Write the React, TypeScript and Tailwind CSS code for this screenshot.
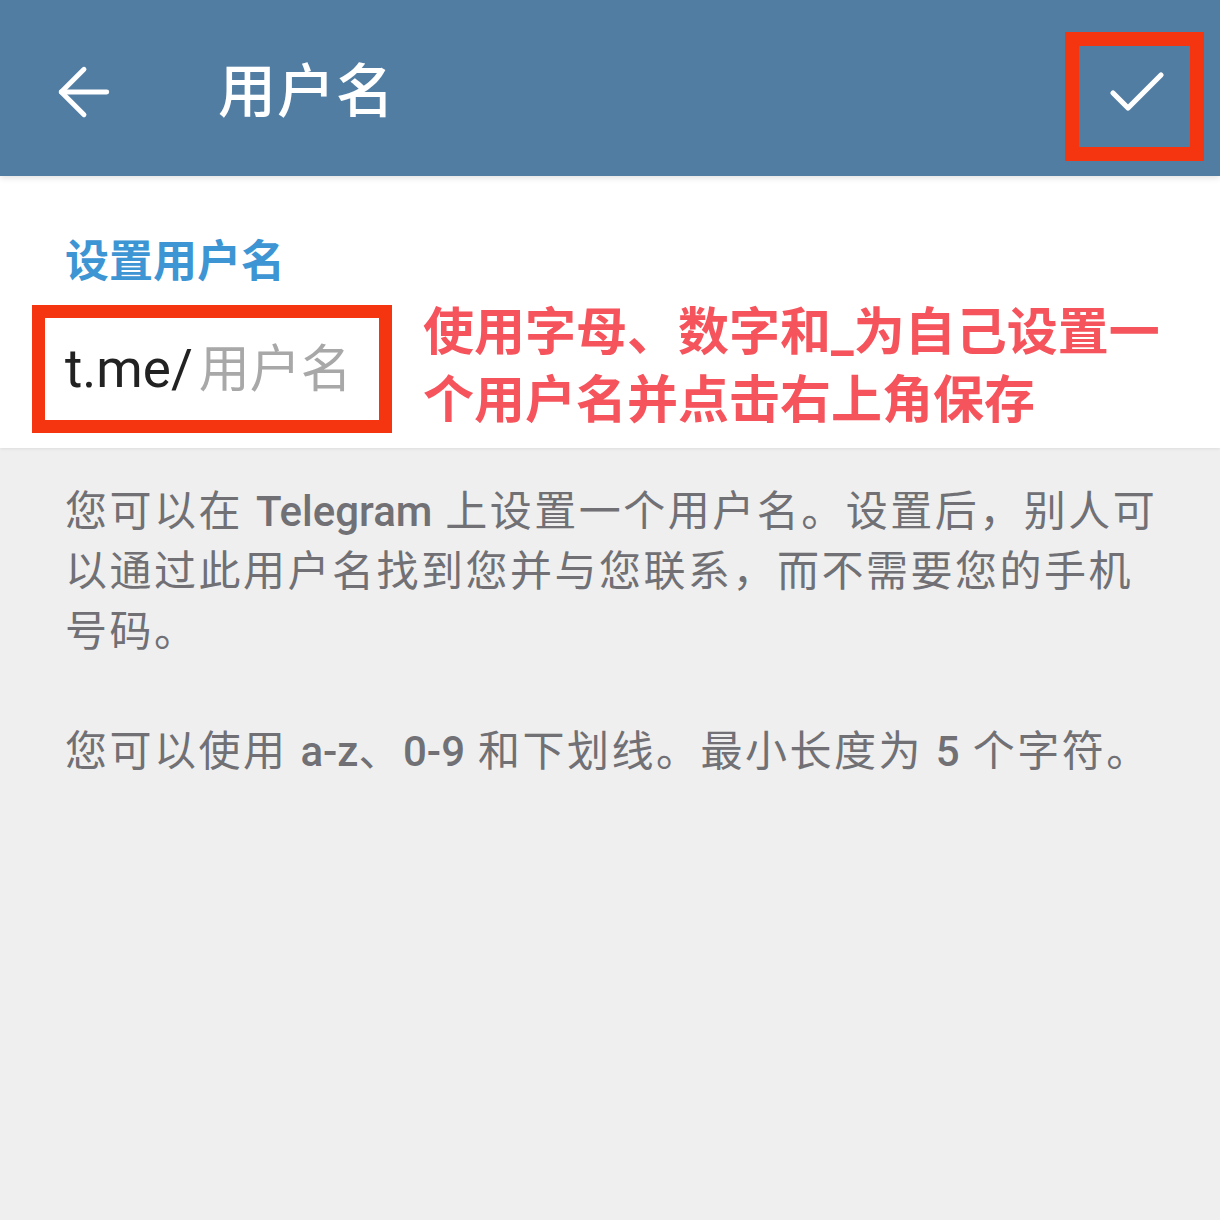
import { ArrowLeft, Check } from 'lucide-react';

const font = { fontFamily: 'Roboto, "Noto Sans CJK SC", sans-serif' };

export default function App() {
  return (
    <div className="w-[1220px] h-[1220px] bg-[#efefef] flex flex-col overflow-hidden" style={font}>
      {/* Top bar */}
      <div className="h-[176px] pt-[8px] bg-[#527da3] flex items-center relative z-10 shadow-[0_2px_6px_rgba(0,0,0,0.12)]">
        <ArrowLeft size={78} strokeWidth={1.5} className="text-white ml-[45px] shrink-0" />
        <h1 className="ml-[95px] text-[58px] leading-none font-medium text-white tracking-[1px]">用户名</h1>
        <div className="ml-auto mr-[16px] self-start mt-[24px] w-[139px] h-[129px] border-[14px] border-[#f4350f] flex items-center justify-center">
          <Check size={72} strokeWidth={1.75} className="text-white mb-[7px] ml-[4px]" />
        </div>
      </div>

      {/* Username field */}
      <div className="bg-white pt-[64px] pb-[13px] shadow-[0_1px_3px_rgba(0,0,0,0.08)] relative">
        <div className="ml-[65px] text-[44px] leading-[44px] font-semibold text-[#3d95d4]">设置用户名</div>
        <div className="flex items-start mt-[21px]">
          <div className="ml-[32px] w-[360px] h-[128px] border-[13px] border-[#f4350f] flex items-center pl-[20px]">
            <span className="text-[53px] text-[#222222] leading-none">t.me/</span>
            <span className="ml-[6px] text-[51px] text-[#a8a8a8] leading-none">用户名</span>
          </div>
          <div className="ml-[31px] mt-[-6px] text-[51px] leading-[68px] font-bold text-[#f5545c] whitespace-nowrap">
            使用字母、数字和_为自己设置一
            <br />
            个用户名并点击右上角保存
          </div>
        </div>
      </div>

      {/* Help text */}
      <div className="pt-[34px] px-[65px] text-[42px] leading-[60px] tracking-[2.5px] text-[#707075] whitespace-nowrap">
        <p>
          您可以在 <span className="font-medium tracking-normal">Telegram</span> 上设置一个用户名。设置后，别人可
          <br />
          以通过此用户名找到您并与您联系，而不需要您的手机
          <br />
          号码。
        </p>
        <p className="mt-[60px]">
          您可以使用 <span className="font-medium tracking-normal">a-z</span>、
          <span className="font-medium tracking-normal">0-9</span> 和下划线。最小长度为{' '}
          <span className="font-medium tracking-normal">5</span> 个字符。
        </p>
      </div>
    </div>
  );
}
